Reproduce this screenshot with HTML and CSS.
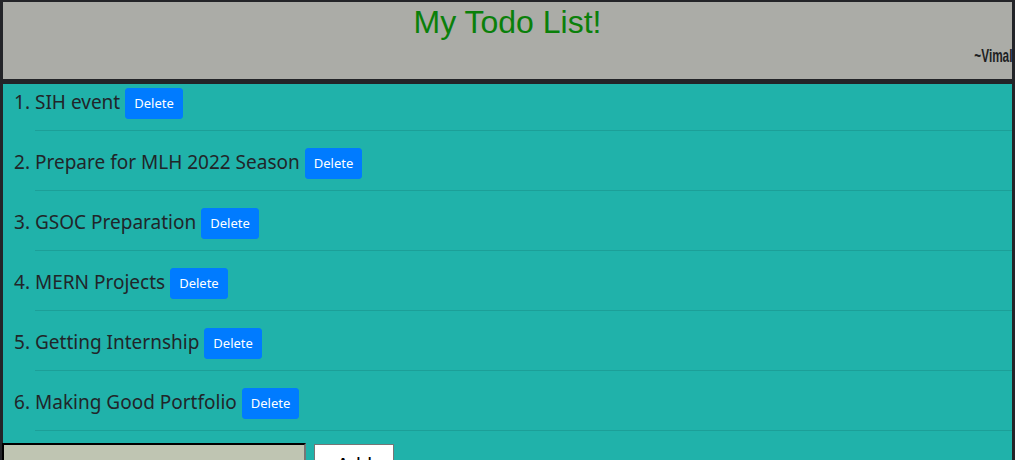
FILE: index.html
```html
<!DOCTYPE html>
<html lang="en">
<head>
<meta charset="utf-8">
<title>My Todo List!</title>
<link rel="stylesheet" href="styles.css">
</head>
<body>
<div class="app">
  <header class="header">
    <h1 class="title">My Todo List!</h1>
    <p class="author"><span class="author-name">~Vimal</span></p>
  </header>
  <main class="main">
    <ol class="todos">
      <li class="todo"><span class="todo-text">SIH event</span><button class="btn-delete">Delete</button></li>
      <li class="todo"><span class="todo-text">Prepare for MLH 2022 Season</span><button class="btn-delete">Delete</button></li>
      <li class="todo"><span class="todo-text">GSOC Preparation</span><button class="btn-delete">Delete</button></li>
      <li class="todo"><span class="todo-text">MERN Projects</span><button class="btn-delete">Delete</button></li>
      <li class="todo"><span class="todo-text">Getting Internship</span><button class="btn-delete">Delete</button></li>
      <li class="todo"><span class="todo-text">Making Good Portfolio</span><button class="btn-delete">Delete</button></li>
    </ol>
    <form class="add-form">
      <input class="add-input" type="text">
      <button class="add-btn" type="button">Add</button>
    </form>
  </main>
</div>
</body>
</html>
```

FILE: styles.css
```css
html, body {
  margin: 0;
  padding: 0;
  height: 100%;
  overflow: hidden;
}
body {
  background: #232428;
  font-family: "Noto Sans", "Open Sans", sans-serif;
  color: #212529;
}
.app {
  margin: 2px 3px 0 3px;
}
.header {
  background: #abaca7;
  height: 77px;
  padding-top: 2px;
  box-sizing: border-box;
  margin-bottom: 5px;
}
.title {
  margin: 0;
  text-align: center;
  font-family: "Liberation Sans", Arial, sans-serif;
  font-weight: normal;
  font-size: 32px;
  line-height: 37px;
  color: #0a800a;
}
.author {
  margin: 5px 0 0 0;
  text-align: right;
  line-height: 20px;
}
.author-name {
  display: inline-block;
  font-family: "Liberation Sans", Arial, sans-serif;
  font-weight: bold;
  font-size: 19px;
  color: #1e1f23;
  transform: scaleX(0.62);
  transform-origin: right center;
}
.main {
  background: #20b2aa;
  min-height: 400px;
}
.todos {
  margin: 0 0 12px 0;
  padding: 0 0 0 32px;
  font-size: 19px;
}
.todo {
  padding: 16px 0 12px 0;
  border-bottom: 1px solid rgba(0, 0, 0, 0.1);
  line-height: 31px;
  height: 31px;
}
.todo:first-child {
  padding-top: 3px;
}
.todo-text {
  vertical-align: middle;
  position: relative;
  top: -1px;
}
.btn-delete {
  margin-left: 5px;
  vertical-align: middle;
  background: #007bff;
  color: #fff;
  border: 1px solid #007bff;
  border-radius: 3px;
  font-family: "Noto Sans", "Open Sans", sans-serif;
  font-size: 13px;
  line-height: 21px;
  padding: 4px 8px;
  height: 31px;
}
.add-form {
  display: flex;
  gap: 8px;
  align-items: flex-start;
}
.add-input {
  width: 304px;
  height: 40px;
  box-sizing: border-box;
  margin: 0 0 0 -1px;
  background: #bfc5b2;
  border: 2px inset #232428;
  border-color: #232428 #767676 #767676 #232428;
}
.add-btn {
  margin-top: 1px;
  width: 80px;
  height: 36px;
  background: #fff;
  border: 1px solid #767676;
  font-family: "Liberation Sans", Arial, sans-serif;
  font-size: 20px;
  padding: 6px 0 0 0;
  color: #000;
}
```
